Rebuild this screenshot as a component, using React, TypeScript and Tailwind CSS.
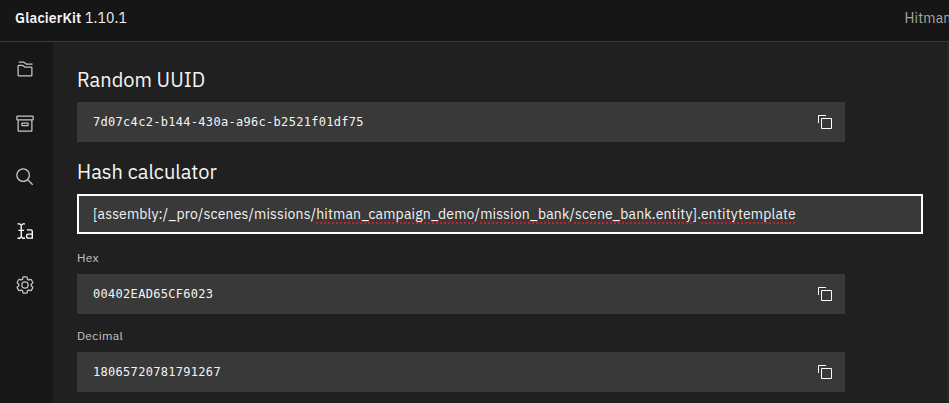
import type { ReactNode } from "react";

function Icon({ size = 20, children }: { size?: number; children: ReactNode }) {
  return (
    <svg width={size} height={size} viewBox="0 0 32 32" fill="currentColor" className="shrink-0">
      {children}
    </svg>
  );
}

const CopyIcon = () => (
  <Icon size={16}>
    <path d="M28,10V28H10V10H28m0-2H10a2,2,0,0,0-2,2V28a2,2,0,0,0,2,2H28a2,2,0,0,0,2-2V10a2,2,0,0,0-2-2Z" />
    <path d="M4,18H2V4A2,2,0,0,1,4,2H18V4H4Z" />
  </Icon>
);

const FoldersIcon = () => (
  <Icon>
    <path d="M26,28H6a2,2,0,0,1-2-2V11A2,2,0,0,1,6,9h5.6665a2,2,0,0,1,1.2007.4L16.3335,12H26a2,2,0,0,1,2,2V26A2,2,0,0,1,26,28ZM11.6665,11H5.9985L6,26H26V14H15.6665Z" />
    <path d="M28,9H17.6665l-4-3H6V4h7.6665a2,2,0,0,1,1.2007.4L18.3335,7H28Z" />
  </Icon>
);

const ArchiveIcon = () => (
  <Icon>
    <path d="M20,21H12a2,2,0,0,1-2-2V17a2,2,0,0,1,2-2h8a2,2,0,0,1,2,2v2A2,2,0,0,1,20,21Zm-8-4v2h8V17Z" />
    <path d="M28,4H4A2,2,0,0,0,2,6v4a2,2,0,0,0,2,2V28a2,2,0,0,0,2,2H26a2,2,0,0,0,2-2V12a2,2,0,0,0,2-2V6A2,2,0,0,0,28,4ZM26,28H6V12H26Zm2-18H4V6H28v4Z" />
  </Icon>
);

const SearchIcon = () => (
  <Icon>
    <path d="M29,27.5859l-7.5521-7.5521a11.0177,11.0177,0,1,0-1.4141,1.4141L27.5859,29ZM4,13a9,9,0,1,1,9,9A9.01,9.01,0,0,1,4,13Z" />
  </Icon>
);

const TextToolsIcon = () => (
  <Icon>
    <g fill="none" stroke="currentColor" strokeWidth="2.2">
      <path d="M4 4.5H7.5L10 7L12.5 4.5H16M10 6V26M4 27.5H7.5L10 25L12.5 27.5H16M5.5 15H14.5" />
      <path d="M19 14.2H25Q27.7 14.2 27.7 17V27.4H21.5Q18.5 27.4 18.5 24.2Q18.5 21 21.5 21H27.7" />
    </g>
  </Icon>
);

const SettingsIcon = () => (
  <Icon>
    <path d="M27,16.76c0-.25,0-.5,0-.76s0-.51,0-.77l1.92-1.68A2,2,0,0,0,29.3,11L26.94,7a2,2,0,0,0-1.73-1,2,2,0,0,0-.64.1l-2.43.82a11.35,11.35,0,0,0-1.31-.75l-.51-2.52a2,2,0,0,0-2-1.61H13.64a2,2,0,0,0-2,1.61l-.51,2.52a11.48,11.48,0,0,0-1.32.75L7.43,6.06A2,2,0,0,0,6.79,6,2,2,0,0,0,5.06,7L2.7,11a2,2,0,0,0,.41,2.51L5,15.24c0,.25,0,.5,0,.76s0,.51,0,.77L3.11,18.45A2,2,0,0,0,2.7,21L5.06,25a2,2,0,0,0,1.73,1,2,2,0,0,0,.64-.1l2.43-.82a11.35,11.35,0,0,0,1.31.75l.51,2.52a2,2,0,0,0,2,1.61h4.72a2,2,0,0,0,2-1.61l.51-2.52a11.48,11.48,0,0,0,1.32-.75l2.42.82a2,2,0,0,0,.64.1,2,2,0,0,0,1.73-1L29.3,21a2,2,0,0,0-.41-2.51ZM25.21,24l-3.43-1.16a8.86,8.86,0,0,1-2.71,1.57L18.36,28H13.64l-.71-3.55a9.36,9.36,0,0,1-2.7-1.57L6.79,24,4.43,20l2.72-2.4a8.9,8.9,0,0,1,0-3.13L4.43,12,6.79,8l3.43,1.16a8.86,8.86,0,0,1,2.71-1.57L13.64,4h4.72l.71,3.55a9.36,9.36,0,0,1,2.7,1.57L25.21,8,27.57,12l-2.72,2.4a8.9,8.9,0,0,1,0,3.13L27.57,20Z" />
    <path d="M16,22a6,6,0,1,1,6-6A5.94,5.94,0,0,1,16,22Zm0-10a3.91,3.91,0,0,0-4,4,3.91,3.91,0,0,0,4,4,3.91,3.91,0,0,0,4-4A3.91,3.91,0,0,0,16,12Z" />
  </Icon>
);

function Snippet({ value }: { value: string }) {
  return (
    <div className="flex h-10 w-[768px] items-center justify-between bg-[#393939] pr-3 pl-4">
      <code className="font-['DejaVu_Sans_Mono',monospace] text-[12px] font-normal tracking-[0.3px] text-[#f4f4f4]">
        {value}
      </code>
      <button className="text-white" aria-label="Copy">
        <CopyIcon />
      </button>
    </div>
  );
}

function Misspelt({ children }: { children: ReactNode }) {
  return (
    <span className="underline decoration-[#c4202c] decoration-dotted decoration-[1.5px] underline-offset-[4px] [text-decoration-skip-ink:none]">
      {children}
    </span>
  );
}

export default function App() {
  return (
    <div className="flex h-[403px] w-[949px] flex-col overflow-hidden bg-[#202020] font-['IBM_Plex_Sans','Roboto',sans-serif] text-[#f4f4f4]">
      <header className="flex h-[42px] shrink-0 items-center justify-between border-b border-[#393939] bg-[#161616] pb-[5px] pl-[15px] text-[14px] whitespace-nowrap">
        <div className="tracking-[0.16px]">
          <span className="font-semibold">GlacierKit</span> 1.10.1
        </div>
        <div className="w-[44.5px] overflow-hidden tracking-[0.16px] text-[#a8a8a8]">Hitman</div>
      </header>
      <div className="flex min-h-0 flex-1">
        <nav className="flex w-[53px] shrink-0 flex-col items-center gap-[34px] bg-[#171717] pt-[17px] pr-[3px] text-[#c6c6c6]">
          <FoldersIcon />
          <ArchiveIcon />
          <SearchIcon />
          <span className="text-white">
            <TextToolsIcon />
          </span>
          <SettingsIcon />
        </nav>
        <main className="flex flex-1 flex-col border-r-2 border-[#282828] pt-6 pl-6">
          <h1 className="mb-2 h-7 text-[20px] leading-7">Random UUID</h1>
          <Snippet value="7d07c4c2-b144-430a-a96c-b2521f01df75" />
          <h1 className="mt-4 mb-2 h-7 text-[20px] leading-7">Hash calculator</h1>
          <div className="flex h-10 w-[846px] shrink-0 items-center border-2 border-white bg-[#393939] pl-[14px] text-[14px] tracking-[0.16px] whitespace-nowrap">
            <span>
              [assembly:/_pro/scenes/missions/<Misspelt>hitman_campaign_demo</Misspelt>/
              <Misspelt>mission_bank</Misspelt>/<Misspelt>scene_bank.entity</Misspelt>].
              <Misspelt>entitytemplate</Misspelt>
            </span>
          </div>
          <div className="mt-4 mb-2 h-4 text-[12px] leading-4 tracking-[0.32px] text-[#c6c6c6]">Hex</div>
          <Snippet value="00402EAD65CF6023" />
          <div className="mt-[14px] mb-2 h-4 text-[12px] leading-4 tracking-[0.32px] text-[#c6c6c6]">Decimal</div>
          <Snippet value="18065720781791267" />
        </main>
      </div>
    </div>
  );
}
